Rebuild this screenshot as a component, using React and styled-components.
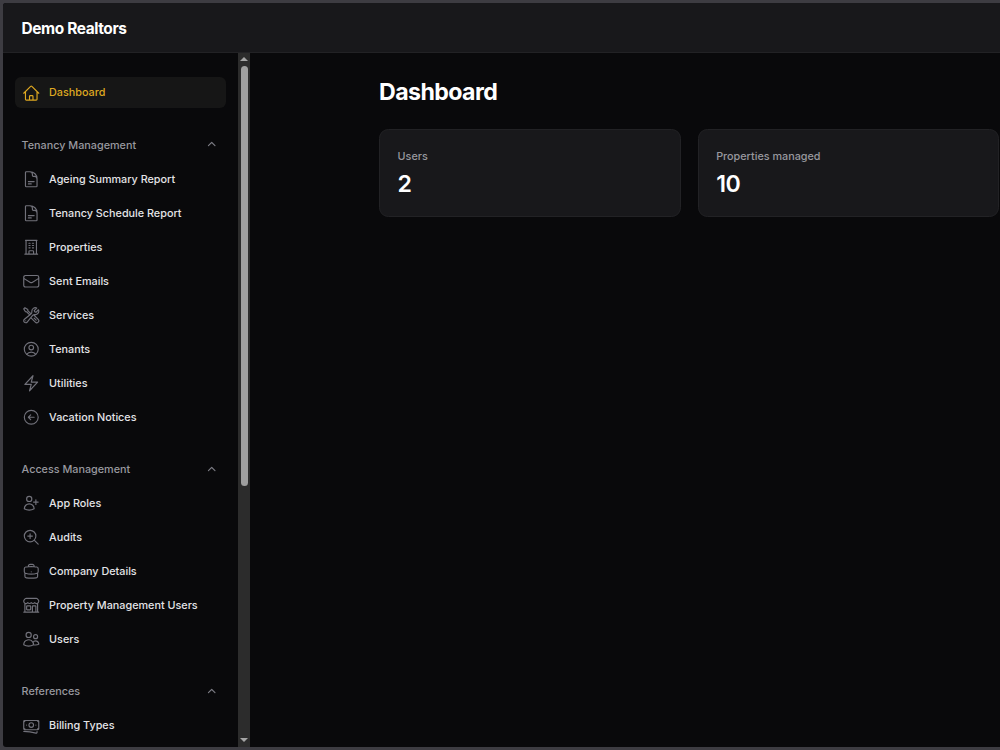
import React from 'react'
import styled, { createGlobalStyle } from 'styled-components'
import {
  HiOutlineArrowLeftCircle,
  HiOutlineBanknotes,
  HiOutlineBolt,
  HiOutlineBriefcase,
  HiOutlineBuildingOffice,
  HiOutlineBuildingStorefront,
  HiOutlineDocumentText,
  HiOutlineEnvelope,
  HiOutlineHome,
  HiOutlineMagnifyingGlassPlus,
  HiOutlineUserCircle,
  HiOutlineUserPlus,
  HiOutlineUsers,
  HiOutlineWrenchScrewdriver,
  HiMiniChevronUp
} from 'react-icons/hi2'

const GlobalStyle = createGlobalStyle`
  body {
    margin: 0;
    background-color: #3d3c42;
    font-family: Inter, "Liberation Sans", sans-serif;
    overflow: hidden;
  }
`

const Window = styled.div`
  display: flex;
  flex-direction: column;
  height: 744px;
  margin: 3px 0 3px 3px;
  border-radius: 3px 0 0 3px;
  background-color: #09090b;
  overflow: hidden;
`

const Topbar = styled.header`
  display: flex;
  align-items: center;
  height: 50px;
  padding: 2px 18.5px 0;
  box-sizing: border-box;
  border-bottom: 1px solid #222225;
  background-color: #18181b;
`

const Brand = styled.div`
  font-size: 15.45px;
  font-weight: 700;
  letter-spacing: -0.025em;
  line-height: 22px;
  color: white;
`

const Body = styled.div`
  display: flex;
  flex: 1;
  min-height: 0;
`

const Sidebar = styled.aside`
  display: flex;
  width: 247px;
  flex-shrink: 0;
`

const Nav = styled.nav`
  display: flex;
  flex-direction: column;
  flex: 1;
  gap: 21.3px;
  padding: 24.4px 12.5px 0 12.4px;
  overflow: hidden;
`

const Group = styled.div`
  display: flex;
  flex-direction: column;
  flex-shrink: 0;
  gap: 3px;
`

const GroupLabel = styled.div`
  display: flex;
  align-items: center;
  justify-content: space-between;
  height: 31px;
  padding: 0 6.2px;
  font-size: 10.81px;
  font-weight: 500;
  line-height: 15px;
  color: #98989f;

  svg {
    width: 15.4px;
    height: 15.4px;
    color: #7c7c84;
  }
`

const Item = styled.a`
  display: flex;
  align-items: center;
  gap: 9px;
  height: 31px;
  padding: 0 6.2px;
  box-sizing: border-box;
  border-radius: 6.2px;
  background-color: ${({ $active }) => ($active ? '#161616' : 'transparent')};
  font-size: 10.81px;
  font-weight: 500;
  line-height: 15px;
  color: ${({ $active }) => ($active ? '#dea821' : '#e4e4e7')};

  svg {
    width: 18.5px;
    height: 18.5px;
    flex-shrink: 0;
    color: ${({ $active }) => ($active ? '#dea821' : '#71717a')};
  }
`

const Scrollbar = styled.div`
  display: flex;
  flex-direction: column;
  align-items: center;
  width: 11.6px;
  padding: 4px 0 5.5px;
  box-sizing: border-box;
  background-color: #2c2c2c;
`

const Arrow = styled.div`
  border-left: 4px solid transparent;
  border-right: 4px solid transparent;
  ${({ $down }) => ($down ? 'border-top' : 'border-bottom')}: 4px solid #a5a5a5;
`

const Track = styled.div`
  flex: 1;
  padding-top: 5px;
`

const Thumb = styled.div`
  width: 7px;
  height: 419.5px;
  border-radius: 4px;
  background-color: #9f9f9f;
`

const Main = styled.main`
  display: flex;
  flex-direction: column;
  flex: 1;
  gap: 23px;
  padding: 25px 0 0 129px;
`

const Title = styled.h1`
  margin: 0;
  font-size: 23.17px;
  font-weight: 700;
  letter-spacing: -0.025em;
  line-height: 28px;
  color: white;
`

const Stats = styled.div`
  display: grid;
  grid-template-columns: 301.6px 301.6px;
  gap: 17px;
`

const Card = styled.section`
  height: 88px;
  padding: 18.5px 17.6px;
  box-sizing: border-box;
  border: 1px solid #222225;
  border-radius: 9.3px;
  background-color: #18181b;
`

const StatLabel = styled.div`
  font-size: 10.81px;
  font-weight: 500;
  line-height: 15.4px;
  color: #98989f;
`

const StatValue = styled.div`
  margin-top: 7px;
  font-size: 23.17px;
  font-weight: 600;
  letter-spacing: -0.025em;
  line-height: 27.8px;
  color: white;
`

const groups = [
  {
    label: 'Tenancy Management',
    items: [
      ['Ageing Summary Report', HiOutlineDocumentText],
      ['Tenancy Schedule Report', HiOutlineDocumentText],
      ['Properties', HiOutlineBuildingOffice],
      ['Sent Emails', HiOutlineEnvelope],
      ['Services', HiOutlineWrenchScrewdriver],
      ['Tenants', HiOutlineUserCircle],
      ['Utilities', HiOutlineBolt],
      ['Vacation Notices', HiOutlineArrowLeftCircle]
    ]
  },
  {
    label: 'Access Management',
    items: [
      ['App Roles', HiOutlineUserPlus],
      ['Audits', HiOutlineMagnifyingGlassPlus],
      ['Company Details', HiOutlineBriefcase],
      ['Property Management Users', HiOutlineBuildingStorefront],
      ['Users', HiOutlineUsers]
    ]
  },
  {
    label: 'References',
    items: [['Billing Types', HiOutlineBanknotes]]
  }
]

const stats = [
  { label: 'Users', value: 2 },
  { label: 'Properties managed', value: 10 }
]

function App() {
  return (
    <>
      <GlobalStyle />
      <Window>
        <Topbar>
          <Brand>Demo Realtors</Brand>
        </Topbar>

        <Body>
          <Sidebar>
            <Nav>
              <Group>
                <Item $active>
                  <HiOutlineHome />
                  Dashboard
                </Item>
              </Group>
              {groups.map((group) => (
                <Group key={group.label}>
                  <GroupLabel>
                    {group.label}
                    <HiMiniChevronUp />
                  </GroupLabel>
                  {group.items.map(([name, Icon]) => (
                    <Item key={name}>
                      <Icon />
                      {name}
                    </Item>
                  ))}
                </Group>
              ))}
            </Nav>
            <Scrollbar>
              <Arrow />
              <Track>
                <Thumb />
              </Track>
              <Arrow $down />
            </Scrollbar>
          </Sidebar>

          <Main>
            <Title>Dashboard</Title>
            <Stats>
              {stats.map((stat) => (
                <Card key={stat.label}>
                  <StatLabel>{stat.label}</StatLabel>
                  <StatValue>{stat.value}</StatValue>
                </Card>
              ))}
            </Stats>
          </Main>
        </Body>
      </Window>
    </>
  )
}

export default App
